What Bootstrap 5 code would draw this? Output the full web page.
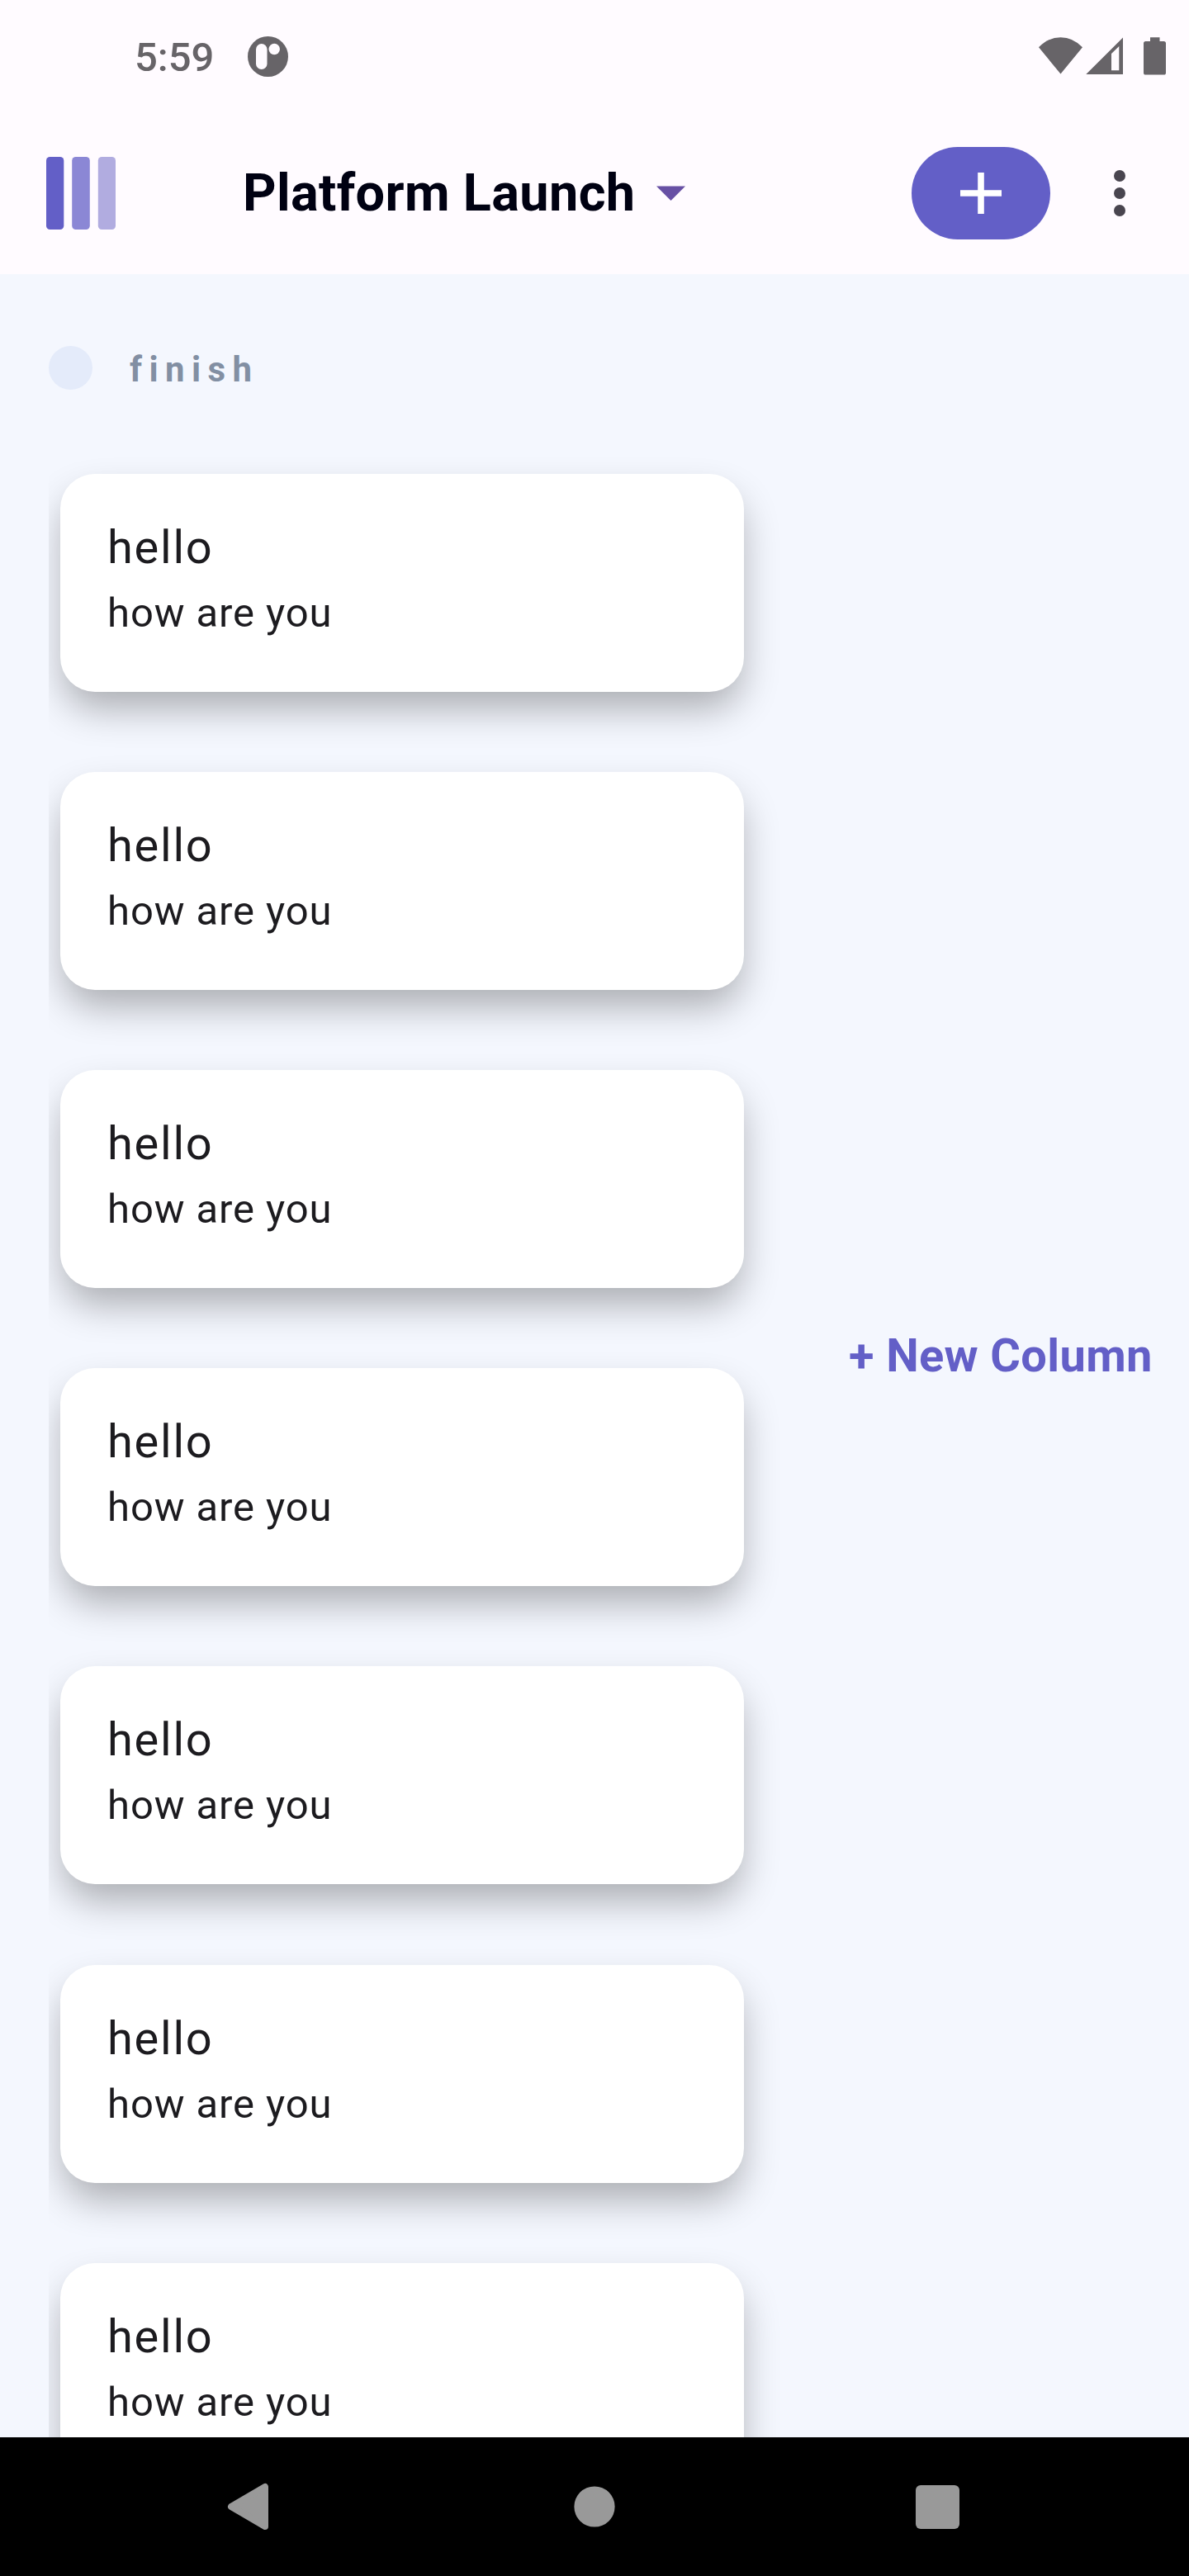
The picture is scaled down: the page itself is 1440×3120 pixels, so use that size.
<!DOCTYPE html>
<html lang="en">
<head>
<meta charset="utf-8">
<meta name="viewport" content="width=device-width, initial-scale=1">
<title>Platform Launch</title>
<link href="https://cdn.jsdelivr.net/npm/bootstrap@5.3.0/dist/css/bootstrap.min.css" rel="stylesheet">
<style>
  body { font-family: Roboto, "Liberation Sans", sans-serif; background: #f4f7fd; color: #1c1b1f; }
  svg { display: block; flex: none; }
  .screen { width: 1440px; height: 3120px; }
  .status-bar { height: 136px; background: #fffbff; color: #676468; padding: 0 28px 0 163px; }
  .clock { font-size: 49px; font-weight: 500; line-height: 58px; width: 137px; margin-top: 41px; }
  .status-icon { margin-top: 44px; }
  .app-bar { height: 196px; background: #fffbff; padding: 0 49px 0 56px; }
  .board-title { font-size: 63px; font-weight: 700; line-height: 74px; letter-spacing: .35px; color: #000112; margin: 0 0 0 154px; }
  .title-caret { margin-left: 26px; }
  .add-btn { width: 168px; height: 112px; background: #635fc7; border-radius: 56px; }
  .more-dots { margin-left: 49px; }
  .board { background: #f4f7fe; min-height: 0; }
  .column-pane { width: 980px; padding-left: 59px; }
  .column-head { height: 53px; margin-top: 87px; margin-bottom: 62px; }
  .dot { width: 53px; height: 53px; background: #e4ebfa; }
  .column-name { font-size: 42px; font-weight: 700; line-height: 50px; letter-spacing: 8.4px; color: #828fa3; margin: 4px 0 0 45px; }
  .task-list { overflow: hidden; padding: 39.6px 0 0 14px; min-height: 0; gap: 97.2px; }
  .task { width: 828px; height: 264px; flex: none; border: 0; border-radius: 42px; padding: 47px 57px 0; color: #1c1b1f;
          box-shadow: 0 24px 46px -4px rgba(0, 0, 0, .3); }
  .task-title { font-size: 56px; font-weight: 400; line-height: 84px; letter-spacing: 1.75px; margin: 0; }
  .task-text { font-size: 49px; line-height: 70px; letter-spacing: .9px; margin: 3px 0 0; }
  .new-column { font-size: 56px; font-weight: 700; line-height: 66px; letter-spacing: .35px; color: #635fc7; margin-left: 48px; }
  .nav-bar { height: 168px; background: #000; padding: 0 278px 0 275px; }
  .nav-home { margin-left: 5px; }
</style>
</head>
<body>
<div class="screen d-flex flex-column overflow-hidden">
  <header class="flex-shrink-0">
    <div class="status-bar d-flex align-items-start">
      <span class="clock">5:59</span>
      <svg class="status-icon" width="49" height="49" viewBox="0 0 49 49"><circle cx="24.5" cy="24.5" r="24.5" fill="currentColor"/><rect x="10" y="9" width="13.5" height="31" rx="6.75" fill="#fffbff"/><circle cx="32.2" cy="15.5" r="6.7" fill="#fffbff"/></svg>
      <svg class="status-icon ms-auto" width="154" height="48" viewBox="1258 44 154 48" fill="currentColor">
        <path d="M1258 57.3Q1269.500 45.200 1284.500 45.200T1311 57.300L1284.500 89.500Z"/>
        <path fill-rule="evenodd" d="M1315.300 90H1360V45.500ZM1346 65L1355.300 56V85.300H1346Z"/>
        <path d="M1393 45.200H1404.500V50H1409.500Q1412 50 1412 52.500V88Q1412 90.600 1409.500 90.600H1387.500Q1385 90.600 1385 88V52.500Q1385 50 1387.500 50H1393Z"/>
      </svg>
    </div>
    <nav class="app-bar d-flex align-items-center">
      <svg width="84" height="88" viewBox="0 0 84 88"><rect width="21.300" height="88" rx="4.500" fill="#635fc7"/><rect x="31.200" width="21.600" height="88" rx="4.500" fill="#8b87d5"/><rect x="62.800" width="21.200" height="88" rx="4.500" fill="#b1ace0"/></svg>
      <h1 class="board-title">Platform Launch</h1>
      <svg class="title-caret me-auto" width="35" height="18" viewBox="0 0 35 18"><path d="M0 .5H35L17.500 18Z" fill="#6750a4"/></svg>
      <button class="add-btn btn p-0 d-flex align-items-center justify-content-center" aria-label="Add">
        <svg width="50" height="50" viewBox="0 0 50 50" fill="#fff"><path d="M21.200 0H28.800V21.200H50V28.800H28.800V50H21.200V28.800H0V21.200H21.200Z"/></svg>
      </button>
      <svg class="more-dots" width="70" height="56" viewBox="0 0 70 56" fill="#49454f"><circle cx="35" cy="7" r="7"/><circle cx="35" cy="28" r="7"/><circle cx="35" cy="49" r="7"/></svg>
    </nav>
  </header>

  <main class="board d-flex flex-grow-1">
    <section class="column-pane d-flex flex-column flex-shrink-0">
      <div class="column-head d-flex flex-shrink-0"><span class="dot rounded-circle"></span><h2 class="column-name">finish</h2></div>
      <div class="task-list d-flex flex-column flex-grow-1">
        <article class="task card"><h3 class="task-title">hello</h3><p class="task-text">how are you</p></article>
        <article class="task card"><h3 class="task-title">hello</h3><p class="task-text">how are you</p></article>
        <article class="task card"><h3 class="task-title">hello</h3><p class="task-text">how are you</p></article>
        <article class="task card"><h3 class="task-title">hello</h3><p class="task-text">how are you</p></article>
        <article class="task card"><h3 class="task-title">hello</h3><p class="task-text">how are you</p></article>
        <article class="task card"><h3 class="task-title">hello</h3><p class="task-text">how are you</p></article>
        <article class="task card"><h3 class="task-title">hello</h3><p class="task-text">how are you</p></article>
      </div>
    </section>
    <div class="d-flex align-items-center"><a class="new-column text-decoration-none text-nowrap" href="#">+ New Column</a></div>
  </main>

  <footer class="nav-bar d-flex align-items-center justify-content-between flex-shrink-0">
    <svg width="51" height="58" viewBox="0 0 51 58"><path d="M5 29L46 5V53Z" fill="#999" stroke="#999" stroke-width="8" stroke-linejoin="round"/></svg>
    <svg class="nav-home" width="50" height="50" viewBox="0 0 50 50"><circle cx="25" cy="25" r="24.600" fill="#999"/></svg>
    <svg width="53" height="53" viewBox="0 0 53 53"><rect width="53" height="53" rx="6" fill="#999"/></svg>
  </footer>
</div>
<script src="https://cdn.jsdelivr.net/npm/bootstrap@5.3.0/dist/js/bootstrap.bundle.min.js"></script>
</body>
</html>
